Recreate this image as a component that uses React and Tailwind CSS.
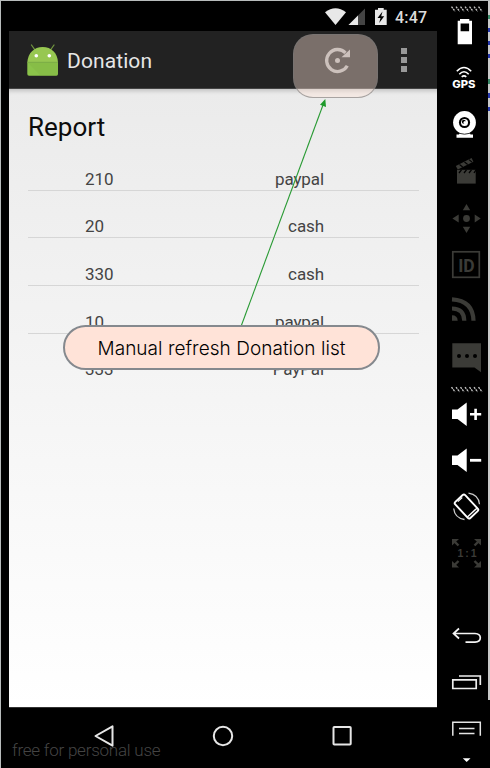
import React from "react";

const ROWS = [
  { amount: "210", method: "paypal" },
  { amount: "20", method: "cash" },
  { amount: "330", method: "cash" },
  { amount: "10", method: "paypal" },
  { amount: "333", method: "PayPal" },
];

const DIM = "#3b3b37";

// One slot of the emulator toolbar; drawings use window coordinates.
function Tool({ y, h, children }) {
  return (
    <svg width="51" height={h} viewBox={`437 ${y} 51 ${h}`} className="block shrink-0">
      {children}
    </svg>
  );
}

function Grip({ y, h, at }) {
  return (
    <Tool y={y} h={h}>
      {[0, 1, 2, 3, 4, 5, 6].map((i) => (
        <path key={i} d={`M${451.5 + i * 4.5} ${at}l3.6 4.6`} stroke="#c4c4c4" strokeWidth="1.3" strokeDasharray="2 .8" />
      ))}
    </Tool>
  );
}

function Speaker({ dy }) {
  return <path d={`M452 ${409.5 + dy}h5.5l9.2-7v23.4l-9.2-7H452z`} fill="#fff" />;
}

function Toolbar() {
  return (
    <aside className="flex w-[51px] shrink-0 flex-col bg-black">
      <Grip y={2} h={13} at={6.7} />
      <Tool y={15} h={33}>
        <path fillRule="evenodd" fill="#fff" d="M460 19h9.3v1.8h2.7v23.5h-14.3V20.800h2.300zM460.600 23.600v7.700h8.500v-7.700z" />
      </Tool>
      <Tool y={48} h={50}>
        <g fill="none" stroke="#fff" strokeWidth="1.6">
          <path d="M456.800 71.200q7.200-7.400 14.400 0" />
          <path d="M459.300 74.200q4.700-4.800 9.400 0" />
          <path d="M461.700 76.900q2.300-2 4.600 0" />
        </g>
        <text x="452.300" y="87.700" textLength="23.200" lengthAdjust="spacingAndGlyphs" fill="#fff" fontSize="10" fontWeight="800" fontFamily="Inter, sans-serif">GPS</text>
      </Tool>
      <Tool y={98} h={50}>
        <circle cx="464.500" cy="122.500" r="11.400" fill="#fff" />
        <path d="M460 131h9l1.500 3.500h2.500v3.300h-16.500v-3.300h2.500z" fill="#fff" />
        <path d="M458.500 133.200q6 2 12 0" stroke="#000" strokeWidth=".8" fill="none" />
        <circle cx="464.500" cy="122.500" r="5.600" fill="#000" />
        <circle cx="464.500" cy="122.500" r="3.500" fill="#fff" />
        <circle cx="463.800" cy="121.800" r="2" fill="#000" />
        <circle cx="465" cy="122.500" r="1.500" fill="#fff" />
      </Tool>
      <Tool y={148} h={47}>
        <path d="M457 169.800h18.700v13.800H457z" fill={DIM} />
        <path d="M459 173l2.500-3.200M464 173l2.500-3.200M469 173l2.500-3.200M474 173l2-3.200" stroke="#000" strokeWidth="1.300" />
        <path d="M455.800 166l15.800-7.900 1.800 3.600-15.600 7.900z" fill={DIM} />
        <path d="M459.500 164.500l3.200 2.500M464.500 162l3.200 2.500M469 159.700l3 2.500" stroke="#000" strokeWidth="1.100" />
      </Tool>
      <Tool y={195} h={47}>
        <g fill={DIM}>
          <circle cx="466.500" cy="218.500" r="3.400" />
          <path d="M466.500 204l3.700 6.300h-7.400zM466.500 233l3.700-6.300h-7.400zM452.400 218.500l6.300-4v8zM480.700 218.500l-6-4v8z" />
        </g>
      </Tool>
      <Tool y={242} h={46}>
        <rect x="452.800" y="251.800" width="26.500" height="25.500" fill="none" stroke={DIM} strokeWidth="1.700" />
        <text x="458.200" y="271.500" textLength="16.500" lengthAdjust="spacingAndGlyphs" fill={DIM} fontSize="18" fontWeight="700" fontFamily="Roboto, sans-serif">ID</text>
      </Tool>
      <Tool y={288} h={46}>
        <path d="M452 320.800v-5.500q5.500 0 5.700 5.500z" fill={DIM} />
        <path d="M452 308.500q12 0 12.300 12.300M452 299.300q21 1.200 21.500 21.500" fill="none" stroke={DIM} strokeWidth="4.200" />
      </Tool>
      <Tool y={334} h={48}>
        <path d="M452.300 343.300H481v29l-6.500-4.800h-22.200z" fill={DIM} />
        <g fill="#000">
          <circle cx="459" cy="356" r="2" /><circle cx="467" cy="356" r="2" /><circle cx="475" cy="356" r="2" />
        </g>
      </Tool>
      <Grip y={382} h={16} at={387.2} />
      <Tool y={398} h={42}>
        <Speaker dy={0} />
        <path d="M470 414.300h11.200M475.600 408.700v11.200" stroke="#fff" strokeWidth="2.600" />
      </Tool>
      <Tool y={440} h={44}>
        <Speaker dy={46} />
        <path d="M470 460.300h11.200" stroke="#fff" strokeWidth="2.800" />
      </Tool>
      <Tool y={484} h={46}>
        <g transform="rotate(-43 466.500 506.500)" fill="none" stroke="#fff">
          <rect x="459.700" y="495.500" width="13.600" height="22" rx="1.800" strokeWidth="1.900" />
          <path d="M460 514.800h13" strokeWidth="1.400" />
          <path d="M463.500 497h6" strokeWidth="1.200" />
        </g>
        <path d="M468.500 493.200q10 1.500 11 11M453.700 508.500q1 9.500 10.800 11" fill="none" stroke="#c8c8c8" strokeWidth="1.300" />
      </Tool>
      <Tool y={530} h={46}>
        <g fill={DIM} stroke={DIM}>
          <path stroke="none" d="M452 539h7l-7 6.500zM481 539h-7l7 6.500zM452 567.500h7l-7-6.500zM481 567.500h-7l7-6.500z" />
          <path strokeWidth="2.400" d="M454 541l4.500 4.500M479 541l-4.500 4.500M454 565.500l4.500-4.500M479 565.500l-4.500-4.500" />
        </g>
        <text x="457.500" y="557" textLength="19" fill={DIM} fontSize="10.500" fontWeight="700" fontFamily="Liberation Sans, sans-serif">1:1</text>
      </Tool>
      <div className="h-[38px] shrink-0" />
      <Tool y={614} h={46}>
        <path d="M459 628.500l-5.500 5 5.500 5M453.500 633.500H475q5.300.3 5.300 4.300t-5.300 4.300h-9.500" fill="none" stroke="#f4f4f4" strokeWidth="1.700" />
      </Tool>
      <Tool y={660} h={46}>
        <path d="M452.800 679.800h23.400v8.700h-23.400zM459 676h21.300v9" fill="none" stroke="#eee" strokeWidth="1.700" />
      </Tool>
      <Tool y={706} h={44}>
        <path d="M452.800 735.700v-13.400h27.500v13.400M459 728.500h15.500M459 733.500h15.500" fill="none" stroke="#e4e4e4" strokeWidth="1.500" />
      </Tool>
      <Tool y={750} h={18}>
        <path d="M462.800 758.300h7.700l-3.800 3.700z" fill="#fff" />
      </Tool>
    </aside>
  );
}

function StatusBar() {
  return (
    <div className="flex h-[29px] shrink-0 items-center">
      <svg width="66" height="29" viewBox="323 2 66 29" className="ml-[314px] block shrink-0">
        <path d="M325 12.300q10.500-8 21 0L335.500 25z" fill="#e8e8e8" />
        <path d="M365 8.500V25h-16.500z" fill="#444" />
        <path d="M358 15.500V25h-9.500z" fill="#e8e8e8" />
        <path d="M378 8h5.700v1.700h3V25H375V9.700h3z" fill="#e8e8e8" />
        <path d="M382.500 11.500l-5 6.500h3l-1.300 5 5-6.700h-3z" fill="#000" />
      </svg>
      <span className="ml-[6px] mt-[3px] text-[16px] font-medium leading-5 tracking-[0.2px] text-[#dcdcdc]">4:47</span>
    </div>
  );
}

function ActionBar() {
  return (
    <header className="flex h-[58px] shrink-0 items-center border-b border-[#444] bg-[#222]">
      <svg width="32" height="34" viewBox="27 43 32 34" className="ml-[18px] block shrink-0">
        <path d="M31.500 45l3.500 5M54 45l-3.500 5" stroke="#70943f" strokeWidth="1.300" strokeLinecap="round" />
        <path d="M27.300 62.300C28 53 34 47 42.700 47S57.500 53 58 62.300z" fill="#97c751" />
        <path d="M27.300 62h30.700v12q0 1.700-1.700 1.700H29q-1.700 0-1.700-1.700z" fill="#8bc34a" />
        <path d="M27.500 62.300l13 13.400H56q2 0 2-2V62.300z" fill="#76a93f" opacity=".18" />
        <path d="M27.500 62.300h30.500" stroke="#78a646" strokeWidth=".8" />
        <circle cx="36.300" cy="55.800" r="1.800" fill="#fff" />
        <circle cx="49.300" cy="55.800" r="1.800" fill="#fff" />
      </svg>
      <h1 className="ml-2 mt-[3px] w-[90px] text-[21px] leading-6 tracking-[0.1px] text-[#e6e6e6]">Donation</h1>
      <svg width="30" height="30" viewBox="323 45 30 30" className="ml-[166px] block shrink-0">
        <path d="M345.500 52.800a11 11 0 1 0 1.800 13" fill="none" stroke="#aaa" strokeWidth="3.300" />
        <path d="M350 49.500v7.800h-8.500z" fill="#aaa" />
        <circle cx="337.500" cy="60.500" r="2.500" fill="#aaa" />
      </svg>
      <div className="ml-[48px] flex flex-col gap-[3px]">
        <i className="size-[6px] bg-[#999]" />
        <i className="size-[6px] bg-[#999]" />
        <i className="size-[6px] bg-[#999]" />
      </div>
    </header>
  );
}

function Report() {
  return (
    <main className="flex h-[618px] shrink-0 flex-col bg-linear-to-b from-[#ebebeb] to-white pl-[19px] pr-[18px] shadow-[inset_0_5px_4px_-3px_rgba(0,0,0,0.18)]">
      <h2 className="mt-[22px] text-[26px] leading-8 text-[#0c0c0c]">Report</h2>
      <ul className="text-[17px] leading-[22px] tracking-[-0.1px] text-[#444]">
        {ROWS.map((r) => (
          <li key={r.amount} className="flex h-[47.7px] items-end justify-between border-b border-[#d6d6d6] pl-[57px] pr-[95px] last:border-transparent">
            <span>{r.amount}</span>
            <span>{r.method}</span>
          </li>
        ))}
      </ul>
    </main>
  );
}

function NavBar() {
  return (
    <nav className="flex h-[61px] shrink-0 items-center border-t border-[#333] pb-[4px]">
      <svg width="24" height="24" viewBox="92 724 24 24" className="ml-[83px] block">
        <path d="M95.500 736l17-9.700v19.400z" fill="none" stroke="#e6e6e6" strokeWidth="2" strokeLinejoin="round" />
      </svg>
      <svg width="24" height="24" viewBox="211 724 24 24" className="ml-[95px] block">
        <circle cx="223" cy="736" r="9.200" fill="none" stroke="#e6e6e6" strokeWidth="2" />
      </svg>
      <svg width="24" height="24" viewBox="330 724 24 24" className="ml-[95px] block">
        <rect x="333.500" y="727" width="17.200" height="17.500" rx=".8" fill="none" stroke="#e6e6e6" strokeWidth="2" />
      </svg>
    </nav>
  );
}

// Callout, pointer and watermark that float over the device screen.
function Annotations() {
  return (
    <div className="pointer-events-none absolute -left-px -top-px h-[768px] w-[490px]">
      <div className="absolute left-[293px] top-[34px] h-[64px] w-[85px] rounded-[20px] border border-[#777]/60 bg-[#ffe3d8]/40" />
      <svg width="490" height="768" className="absolute left-0 top-0">
        <path d="M241 326.500L323 105" stroke="#289a33" strokeWidth="1.100" />
        <path d="M325.300 99l.7 8-6-2.200z" fill="#1f9a2b" />
      </svg>
      <div className="absolute left-[63px] top-[325px] flex h-[45px] w-[317px] items-center justify-center rounded-full border-2 border-[#85898e] bg-[#ffe3d8] pt-[3px]">
        <span className="whitespace-nowrap font-['Inter',sans-serif] text-[19px] font-light tracking-[0.04px] text-black">Manual refresh Donation list</span>
      </div>
      <span className="absolute left-[12px] top-[738px] whitespace-nowrap text-[17px] font-light leading-6 tracking-[-0.23px] text-[#444]">free for personal use</span>
    </div>
  );
}

export default function App() {
  return (
    <div className="relative flex h-[768px] w-[490px] overflow-hidden border-l border-t border-[#b8bcbc] bg-black font-['Roboto',sans-serif]">
      <div className="flex w-[436px] shrink-0 flex-col pl-2 pt-px">
        <StatusBar />
        <ActionBar />
        <Report />
        <NavBar />
      </div>
      <div className="flex flex-col pt-px">
        <Toolbar />
      </div>
      <div className="flex h-[699px] w-[2px] flex-col gap-[9px] bg-[#c9c9c9] pt-[14px]">
        <i className="h-[4px] bg-[#3a8a68]" />
        <i className="h-[4px] bg-[#2637ad]" />
        <i className="h-[4px] bg-[#2637ad]" />
        <i className="h-[4px] bg-[#2637ad]" />
        <i className="mt-[12px] h-[5px] bg-[#3a8a68]" />
        <i className="h-[5px] bg-[#2637ad]" />
        <i className="h-[4px] bg-[#2637ad]" />
      </div>
      <Annotations />
    </div>
  );
}
